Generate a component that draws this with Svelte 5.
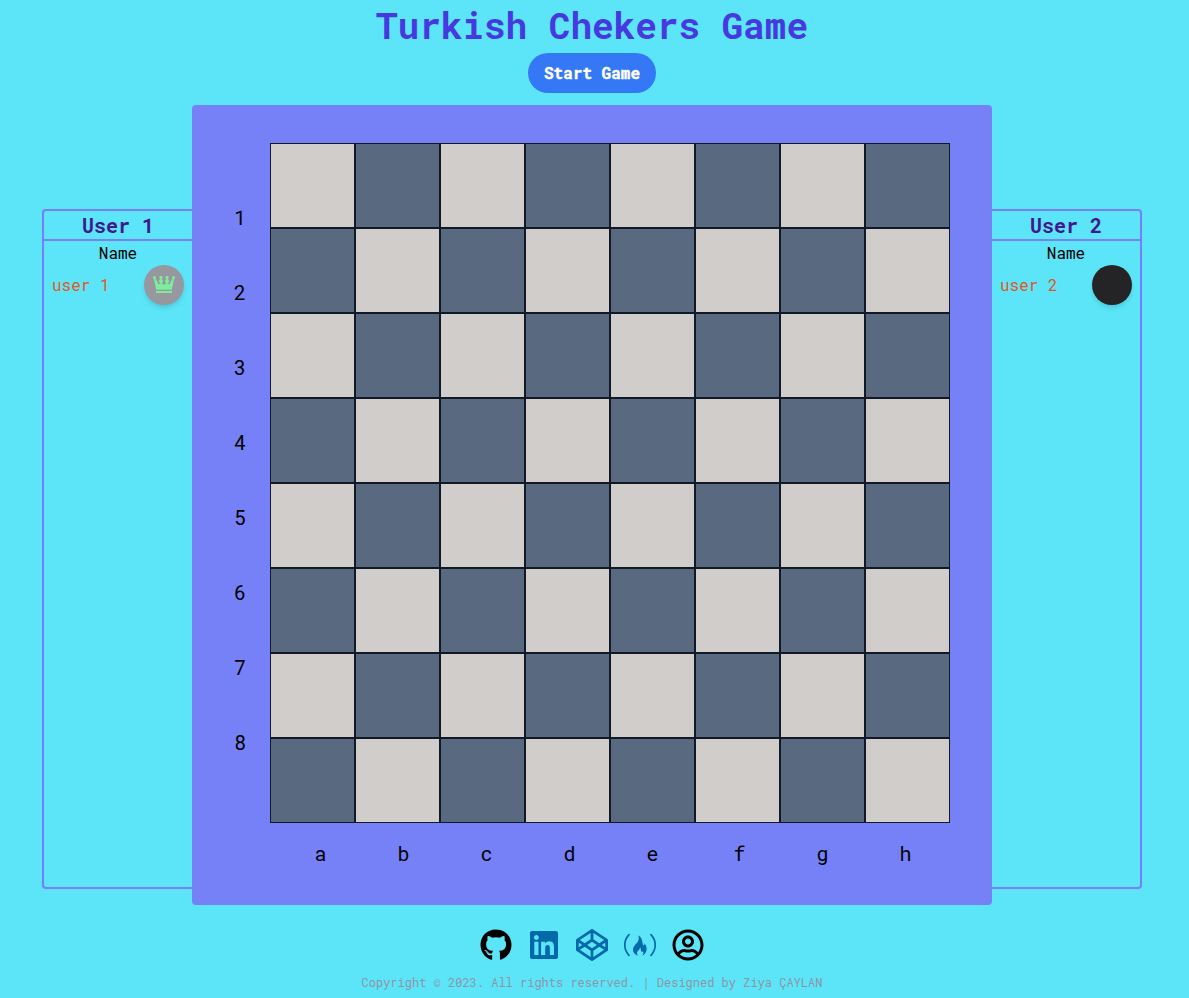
<script>
  const ranks = [1, 2, 3, 4, 5, 6, 7, 8];
  const files = ['a', 'b', 'c', 'd', 'e', 'f', 'g', 'h'];
</script>

<div class="page">
  <header>
    <h1>Turkish Chekers Game</h1>
    <button>Start Game</button>
  </header>

  <main>
    <section class="panel left">
      <h2>User 1</h2>
      <p class="caption">Name</p>
      <div class="player">
        <span>user 1</span>
        <div class="piece light">
          <svg width="24" height="20" viewBox="0 0 24 20" fill="currentColor">
            <path d="M1.800 4h1.700L6.500 10.300l1.700-.6V3h1.600v6.500l2.200 1.200 2.200-1.200V3h1.600v6.700l1.700.6L20.500 4h1.700L19.800 15.700H4.200z" />
            <circle cx="2.400" cy="3.600" r="1.500" /><circle cx="21.600" cy="3.600" r="1.500" />
            <circle cx="9" cy="3.400" r="1.700" /><circle cx="15" cy="3.400" r="1.700" />
            <circle cx="9" cy="7.300" r="2" /><circle cx="15" cy="7.300" r="2" />
            <path d="M4 17h16v2H4z" />
          </svg>
        </div>
      </div>
    </section>

    <section class="board">
      <div class="ranks">
        {#each ranks as rank}<span>{rank}</span>{/each}
      </div>
      <div class="grid">
        {#each ranks as rank, r}
          {#each files as file, c}
            <div class="cell" class:dark={(r + c) % 2 === 1}></div>
          {/each}
        {/each}
      </div>
      <div class="files">
        {#each files as file}<span>{file}</span>{/each}
      </div>
    </section>

    <section class="panel right">
      <h2>User 2</h2>
      <p class="caption">Name</p>
      <div class="player">
        <span>user 2</span>
        <div class="piece black"></div>
      </div>
    </section>
  </main>

  <footer>
    <nav>
      <svg class="ink" viewBox="-8 0 512 512"><path d="M165.9 397.4c0 2-2.3 3.6-5.2 3.6-3.3.3-5.6-1.3-5.6-3.6 0-2 2.3-3.6 5.2-3.6 3-.3 5.6 1.3 5.6 3.6zm-31.1-4.5c-.7 2 1.3 4.3 4.3 4.9 2.6 1 5.6 0 6.2-2s-1.3-4.3-4.3-5.2c-2.6-.7-5.5.3-6.2 2.3zm44.2-1.7c-2.9.7-4.9 2.6-4.6 4.9.3 2 2.9 3.3 5.9 2.6 2.9-.7 4.9-2.6 4.6-4.6-.3-1.9-3-3.2-5.900-2.900zM244.8 8C106.1 8 0 113.3 0 252c0 110.9 69.8 205.8 169.5 239.2 12.8 2.3 17.3-5.6 17.3-12.1 0-6.2-.3-40.4-.3-61.4 0 0-70 15-84.7-29.8 0 0-11.4-29.1-27.8-36.6 0 0-22.9-15.7 1.6-15.4 0 0 24.9 2 38.6 25.8 21.9 38.6 58.6 27.5 72.9 20.9 2.3-16 8.8-27.1 16-33.7-55.9-6.2-112.3-14.3-112.3-110.5 0-27.5 7.6-41.3 23.6-58.9-2.6-6.5-11.1-33.3 2.6-67.9 20.9-6.5 69 27 69 27 20-5.6 41.5-8.5 62.8-8.5s42.8 2.9 62.8 8.5c0 0 48.1-33.6 69-27 13.7 34.7 5.2 61.4 2.6 67.9 16 17.7 25.8 31.5 25.8 58.9 0 96.5-58.9 104.2-114.8 110.5 9.2 7.9 17 22.9 17 46.4 0 33.7-.3 75.4-.3 83.6 0 6.5 4.6 14.4 17.3 12.1C428.2 457.8 496 362.9 496 252 496 113.3 383.5 8 244.8 8zM97.2 352.9c-1.3 1-1 3.3.7 5.2 1.6 1.6 3.9 2.3 5.2 1 1.3-1 1-3.3-.7-5.2-1.6-1.6-3.9-2.3-5.2-1zm-10.8-8.1c-.7 1.3.3 2.9 2.3 3.9 1.6 1 3.6.7 4.3-.7.7-1.3-.3-2.9-2.3-3.9-2-.6-3.6-.3-4.3.7zm32.4 35.6c-1.6 1.3-1 4.3 1.3 6.2 2.3 2.3 5.2 2.6 6.5 1 1.3-1.3.7-4.3-1.3-6.2-2.2-2.3-5.2-2.6-6.5-1zm-11.4-14.7c-1.6 1-1.6 3.6 0 5.9 1.6 2.3 4.3 3.3 5.6 2.3 1.6-1.3 1.6-3.9 0-6.2-1.4-2.3-4-3.3-5.6-2z" /></svg>
      <svg viewBox="-32 0 512 512"><path d="M416 32H31.9C14.3 32 0 46.5 0 64.3v383.4C0 465.5 14.3 480 31.9 480H416c17.6 0 32-14.5 32-32.3V64.3c0-17.8-14.4-32.3-32-32.3zM135.4 416H69V202.2h66.5V416zm-33.2-243c-21.3 0-38.5-17.3-38.5-38.5S80.9 96 102.2 96c21.2 0 38.5 17.3 38.5 38.5 0 21.3-17.2 38.5-38.5 38.5zm282.1 243h-66.4V312c0-24.8-.5-56.7-34.5-56.7-34.6 0-39.9 27-39.9 54.9V416h-66.4V202.2h63.7v29.2h.9c8.9-16.8 30.6-34.5 62.9-34.5 67.2 0 79.7 44.3 79.7 101.9V416z" /></svg>
      <svg viewBox="0 0 512 512"><path d="M502.285 159.704l-234-156c-7.987-4.915-16.568-4.994-24.571 0l-234 156C3.714 163.703 0 170.847 0 177.989v155.999c0 7.143 3.714 14.286 9.715 18.286l234 156.022c7.987 4.915 16.568 4.994 24.571 0l234-156.022c6-3.999 9.715-11.143 9.715-18.286V177.989c-.001-7.142-3.715-14.286-9.716-18.285zM278 63.131l172.286 114.858-76.857 51.429L278 165.703V63.131zm-44 0v102.572l-95.429 63.715-76.857-51.429L234 63.131zM44 219.132l55.143 36.857L44 292.847v-73.715zm190 229.715L61.714 333.989l76.857-51.429L234 346.275v102.572zm22-140.858l-77.715-52 77.715-52 77.715 52-77.715 52zm22 140.858V346.275l95.429-63.715 76.857 51.429L278 448.847zm190-156l-55.143-36.857L468 219.132v73.715z" /></svg>
      <svg viewBox="0 0 32 32">
        <path d="M5 5.700C-.6 11.700-.6 20.300 5 26.300M27 5.700c5.600 6 5.600 14.600 0 20.600" fill="none" stroke="currentColor" stroke-width="1.700" stroke-linecap="round" />
        <path transform="translate(-.7 0)" d="M15 6.300c3 1.700 3.900 4.600 4.200 7.500.2 1.900.6 2.700 1.300 2.400.7-.3.700-1.200.3-2.300 2 2 2.800 4.300 2.500 6.800-.3 2.600-1.900 4.800-4.500 6.100 1.400-1.500 1.700-3 .7-4.600-.6.800-1.500.900-1.800-.2-.3-1.200.2-2.100-.9-3.500-.2 2.500-3.100 3.200-3.100 5.500 0 1.300.5 2.200 1.500 3-3.800-1.300-5.700-3.700-5.500-6.700.3-4 4.500-5.500 5.500-9.300.4-1.600.4-3.100-.2-4.700z" />
      </svg>
      <svg class="ink" viewBox="-8 0 512 512"><path d="M248 104c-53 0-96 43-96 96s43 96 96 96 96-43 96-96-43-96-96-96zm0 144c-26.500 0-48-21.500-48-48s21.500-48 48-48 48 21.500 48 48-21.500 48-48 48zm0-240C111 8 0 119 0 256s111 248 248 248 248-111 248-248S385 8 248 8zm0 448c-49.700 0-95.100-18.300-130.100-48.400 14.900-23 40.400-38.600 69.600-39.500 20.800 6.400 40.600 9.600 60.500 9.600s39.700-3.100 60.500-9.600c29.200 1 54.700 16.500 69.600 39.500-35 30.100-80.400 48.400-130.100 48.400zm162.700-84.100c-24.400-31.400-62.100-51.900-105.100-51.900-10.200 0-26 9.600-57.600 9.600-31.500 0-47.400-9.600-57.600-9.600-42.900 0-80.600 20.500-105.100 51.900C61.900 339.200 48 299.400 48 256c0-110.300 89.700-200 200-200s200 89.700 200 200c0 43.400-13.900 83.200-37.300 115.900z" /></svg>
    </nav>
    <p>Copyright © 2023. All rights reserved. | Designed by Ziya ÇAYLAN</p>
  </footer>
</div>

<style>
  :global(body) {
    background: #5ce5f8;
  }
  .page {
    box-sizing: border-box;
    width: 1184px;
    height: 998px;
    overflow: hidden;
    padding-top: 5px;
    display: flex;
    flex-direction: column;
    align-items: center;
    font-family: 'Roboto Mono', 'DejaVu Sans Mono', monospace;
    font-size: 16px;
    line-height: 24px;
    color: #000;
  }
  h1, h2, p {
    margin: 0;
  }
  header {
    display: flex;
    flex-direction: column;
    align-items: center;
    height: 100px;
  }
  h1 {
    font-size: 36px;
    line-height: 40px;
    font-weight: 700;
    color: #4639e0;
    white-space: nowrap;
  }
  button {
    margin-top: 8px;
    width: 128px;
    height: 40px;
    padding: 0;
    border: 0;
    border-radius: 20px;
    background: #3478f6;
    color: #fff;
    font: 700 16px/24px 'Roboto Mono', 'DejaVu Sans Mono', monospace;
    -webkit-text-stroke: 0.4px #fff;
  }
  main {
    display: flex;
    align-items: flex-start;
  }
  .panel {
    box-sizing: border-box;
    width: 150px;
    height: 680px;
    margin-top: 104px;
    border: 2px solid #7681f7;
    text-align: center;
  }
  .left {
    border-right: 0;
    border-radius: 4px 0 0 4px;
  }
  .right {
    border-left: 0;
    border-radius: 0 4px 4px 0;
  }
  h2 {
    font-size: 20px;
    line-height: 28px;
    height: 28px;
    font-weight: 700;
    color: #42188e;
    border-bottom: 2px solid #7681f7;
  }
  .player {
    display: flex;
    justify-content: space-between;
    align-items: center;
    padding: 0 8px;
    color: #e2571c;
  }
  .piece {
    width: 40px;
    height: 40px;
    border-radius: 50%;
    display: flex;
    align-items: center;
    justify-content: center;
    box-shadow: 0 4px 6px -1px #0000001a, 0 2px 4px -2px #0000001a;
  }
  .light {
    background: #96979f;
    color: #7eeb9d;
  }
  .light svg {
    margin-bottom: 2px;
  }
  .black {
    background: #242427;
  }
  .board {
    box-sizing: border-box;
    width: 800px;
    height: 800px;
    padding-top: 38px;
    border-radius: 4px;
    background: #7681f7;
    display: grid;
    grid-template-columns: 78px 680px;
    grid-template-rows: 680px 60px;
    font-size: 20px;
    line-height: 28px;
  }
  .ranks {
    display: flex;
    flex-direction: column;
    padding: 37px 0 0 18px;
  }
  .ranks span {
    height: 75px;
    line-height: 75px;
    text-align: center;
  }
  .grid {
    display: grid;
    grid-template-columns: repeat(8, 85px);
    grid-template-rows: repeat(8, 85px);
  }
  .cell {
    background: #d1cdca;
    border: 1px solid #111827;
  }
  .dark {
    background: #586980;
  }
  .files {
    grid-column: 2;
    display: flex;
    padding: 16px 0 0 9px;
  }
  .files span {
    width: 83px;
    text-align: center;
  }
  .files span:nth-child(6) {
    margin-left: 4px;
  }
  footer {
    display: flex;
    flex-direction: column;
    align-items: center;
    padding-top: 24px;
  }
  nav {
    display: flex;
    gap: 16px;
    color: #0369a8;
  }
  nav svg {
    width: 32px;
    height: 32px;
    fill: currentColor;
  }
  nav .ink {
    color: #000;
  }
  footer p {
    margin-top: 13px;
    font-size: 12px;
    line-height: 16px;
    color: #8c96a6;
    white-space: nowrap;
  }
</style>
